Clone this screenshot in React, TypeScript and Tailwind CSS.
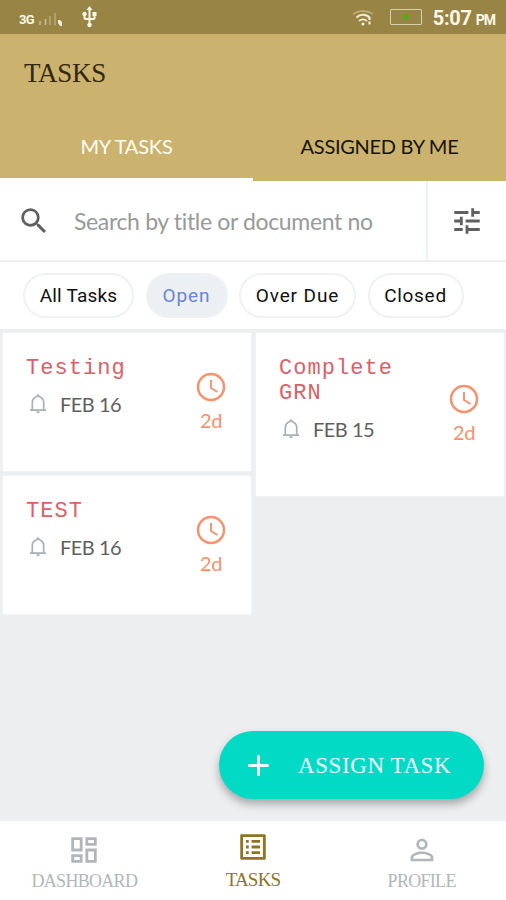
import React from "react";
import {
	MdAdd,
	MdOutlineDashboard,
	MdOutlineListAlt,
	MdPersonOutline,
	MdSearch,
	MdTune,
	MdUsb,
} from "react-icons/md";

interface Task {
	title: string;
	date: string;
	due: string;
}

const columns: Task[][] = [
	[
		{ title: "Testing", date: "FEB 16", due: "2d" },
		{ title: "TEST", date: "FEB 16", due: "2d" },
	],
	[{ title: "Complete GRN", date: "FEB 15", due: "2d" }],
];

const filters = [
	{ label: "All Tasks", width: "w-[111px]", tracking: "tracking-[0.2px]" },
	{ label: "Open", width: "w-[82px]", tracking: "tracking-[0.9px]" },
	{ label: "Over Due", width: "w-[117px]", tracking: "tracking-[0.9px]" },
	{ label: "Closed", width: "w-[96px]", tracking: "tracking-[0.7px]" },
];

const navItems = [
	{ label: "DASHBOARD", icon: MdOutlineDashboard, tracking: "tracking-[-0.7px]" },
	{ label: "TASKS", icon: MdOutlineListAlt, tracking: "tracking-[-0.8px]" },
	{ label: "PROFILE", icon: MdPersonOutline, tracking: "tracking-[-0.7px]" },
];

const BellIcon = () => (
	<svg width="24" height="24" viewBox="0 0 24 24" fill="none" stroke="#a9afb2" strokeWidth="1.700" className="shrink-0">
		<path d="M4 18.200h16M6.300 18V10.500c0-3 2-5 4.300-5.800L12 3l1.400 1.700c2.300.8 4.300 2.800 4.300 5.800V18" />
		<path d="M10.500 20.200h3" />
	</svg>
);

const ClockIcon = () => (
	<svg width="34" height="34" viewBox="0 0 34 34" fill="none" stroke="currentColor" className="shrink-0">
		<circle cx="17" cy="17" r="13" strokeWidth="2.500" />
		<path d="M17 10v8l6.500 4" strokeWidth="1.900" />
	</svg>
);

const StatusBar = () => (
	<div className="h-[34px] shrink-0 bg-[#988444] flex items-center justify-between pl-[19px] pr-[11px] text-[#fdf8e8] font-['Roboto',sans-serif]">
		<div className="flex items-center">
			<span className="w-[16px] text-[13px] font-bold leading-none tracking-[-0.6px] mt-1">3G</span>
			<svg width="25" height="16" viewBox="0 0 25 16" className="ml-[3px] mt-1">
				<path d="M2 10v4M7.500 8v6" stroke="#c9bd93" strokeWidth="1.500" />
				<path d="M12 5v9M17 2v12" stroke="#b8a978" strokeWidth="1.500" />
				<path d="M20 9h2l2 2v4h-2l-2-3z" fill="#f4ecd3" />
			</svg>
			<MdUsb className="ml-[14px] w-[25px] h-[24px]" />
		</div>
		<div className="flex items-center">
			<svg width="22" height="18" viewBox="0 0 22 18" fill="none" className="mt-[2px]">
				<path d="M1 5c6-4 14-4 20 0" stroke="#c2b48a" strokeWidth="1.500" />
				<path d="M4.500 8.500c4-4 10-3.500 13.500.5" stroke="#f4ecd3" strokeWidth="2" />
				<path d="M7 12c2.500-2 5.500-2 8 0" stroke="#f4ecd3" strokeWidth="1.700" />
				<path d="M17.500 9v2M17.500 12.500v3" stroke="#f4ecd3" strokeWidth="2.200" />
				<circle cx="11" cy="15" r="1.500" fill="#fff5db" />
			</svg>
			<div className="ml-[16px] w-[32px] h-[16px] border border-[#d8cfae] rounded-[1px] flex items-center justify-center">
				<div className="w-[6px] h-[6px] rounded-full bg-[#5aa81c]" />
			</div>
			<span className="ml-[11px] mt-[2px] text-[20px] font-bold leading-none tracking-[-0.3px]">5:07</span>
			<span className="ml-[4px] mt-[5px] text-[14px] font-bold leading-none tracking-[-1px]">PM</span>
		</div>
	</div>
);

const Header = () => (
	<header className="h-[147px] shrink-0 bg-[#cbb26f] flex flex-col justify-between">
		<h1 className="pt-[22px] pl-6 text-[27px] leading-[34px] tracking-[-0.3px] text-[#33270d] font-['Liberation_Serif',serif]">TASKS</h1>
		<div className="flex h-[67px] text-[20px] font-['Lato',sans-serif]">
			<button className="w-[253px] border-b-[3px] border-white text-[#fffdf5] tracking-[-0.2px] pb-[1px]">MY TASKS</button>
			<button className="flex-1 text-[#171203] tracking-[-0.3px] pb-1">ASSIGNED BY ME</button>
		</div>
	</header>
);

const SearchBar = () => (
	<div className="h-[81px] shrink-0 flex border-b-2 border-[#eef0f1] text-[#606060]">
		<div className="flex-1 flex items-center pl-[17px]">
			<MdSearch className="w-[34px] h-[34px]" />
			<span className="ml-[23px] mt-[2px] text-[23px] leading-none tracking-[-0.35px] text-[#999] whitespace-nowrap font-['Lato',sans-serif]">Search by title or document no</span>
		</div>
		<div className="w-[80px] border-l-2 border-[#eef0f1] flex items-center justify-center">
			<MdTune className="w-[34px] h-[34px]" />
		</div>
	</div>
);

const TaskCard = ({ task }: { task: Task }) => (
	<article className="bg-white flex justify-between items-center pl-[23px] pr-[25px] shadow-[0_0_2px_#f8f9fa]">
		<div className="w-[128px] pt-[23px] pb-[54px]">
			<h2 className="text-[22px] leading-[25px] tracking-[1.05px] text-[#dc6068] font-['Liberation_Mono',monospace]">{task.title}</h2>
			<div className="mt-[11px] mb-px flex items-center h-6">
				<BellIcon />
				<span className="ml-[10px] text-[20px] leading-none tracking-[-0.5px] text-[#5f5f5f] font-['Lato',sans-serif]">{task.date}</span>
			</div>
		</div>
		<div className="w-[30px] mb-[2px] flex flex-col items-center text-[#fa906c]">
			<ClockIcon />
			<span className="mt-[3px] text-[20px] leading-[26px] tracking-[-0.3px] font-['Lato',sans-serif]">{task.due}</span>
		</div>
	</article>
);

const BottomNav = () => (
	<nav className="h-[79px] shrink-0 bg-white grid grid-cols-3 shadow-[0_-1px_2px_#dfe1e3]">
		{navItems.map(({ label, icon: Icon, tracking }) => {
			const active = label === "TASKS";
			return (
				<div key={label} className={`flex flex-col items-center ${active ? "pt-[9px] text-[#8f7425]" : "pt-[12px] text-[#b3b6b9]"}`}>
					<Icon className="w-[34px] h-[34px]" />
					<span className={`font-['Liberation_Serif',serif] ${tracking} ${active ? "mt-[4px] text-[19px] leading-[24px]" : "mt-[3px] text-[18px] leading-[22px]"}`}>{label}</span>
				</div>
			);
		})}
	</nav>
);

export default function App() {
	return (
		<div className="w-full h-[900px] flex flex-col overflow-hidden bg-white">
			<StatusBar />
			<Header />
			<SearchBar />
			<div className="h-[67px] shrink-0 flex items-center gap-[11.5px] pl-[23px]">
				{filters.map((filter) => (
					<button
						key={filter.label}
						className={`h-[45px] shrink-0 rounded-full border-2 border-[#eff1f2] pt-px text-[19px] font-['Roboto',sans-serif] ${filter.width} ${filter.tracking} ${filter.label === "Open" ? "bg-[#edf0f2] text-[#6b83da]" : "bg-white text-[#111]"}`}
					>
						{filter.label}
					</button>
				))}
			</div>
			<main className="relative flex-1 bg-[#eceef0] flex items-start gap-[5px] pt-[4px] pl-[3px] pr-[2px]">
				{columns.map((tasks, index) => (
					<div key={index} className="flex-1 flex flex-col gap-[5px]">
						{tasks.map((task) => (
							<TaskCard key={task.title} task={task} />
						))}
					</div>
				))}
				{/* Floating action */}
				<button className="absolute right-[22px] bottom-[22px] w-[265px] h-[68px] rounded-full bg-[#03dac6] text-[#effffc] flex items-center pl-[22px] shadow-[0_5px_8px_rgba(0,0,0,0.3)]">
					<MdAdd className="w-[35px] h-[35px]" />
					<span className="ml-[22px] text-[23px] leading-none tracking-[0.6px] whitespace-nowrap font-['Liberation_Serif',serif]">ASSIGN TASK</span>
				</button>
			</main>
			<BottomNav />
		</div>
	);
}
